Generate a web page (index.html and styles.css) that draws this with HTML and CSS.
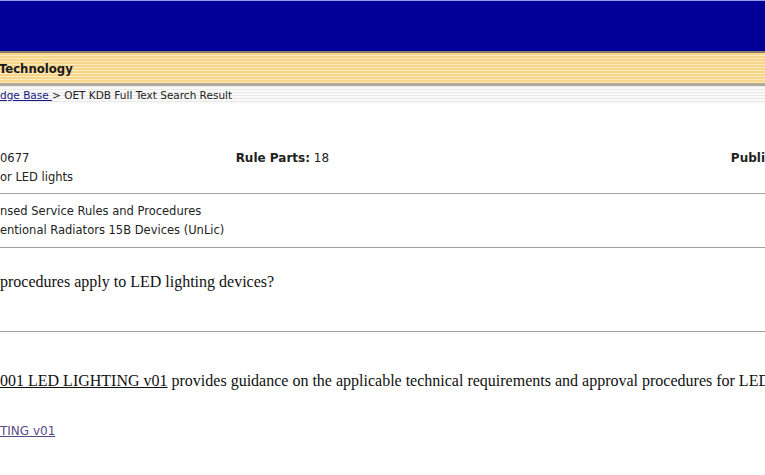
FILE: index.html
```html
<!DOCTYPE html>
<html>
<head>
	<title>OET KDB Full Text Search Result</title>
	<link rel="stylesheet" href="styles.css">
</head>
<body>

	<div class="banner"></div>
	<div class="org-bar">
		<span class="org-name">Technology</span>
	</div>
	<div class="crumbs">
		<a href="#" class="crumb-link">dge Base </a> &gt; OET KDB Full Text Search Result
	</div>

	<div class="record">
		<div class="meta">
			<div class="meta-cell">
				<div>0677</div>
				<div>or LED lights</div>
			</div>
			<div class="meta-cell meta-rule">
				<b>Rule Parts:</b> 18
			</div>
			<div class="meta-cell meta-pub">
				<b>Publi</b>
			</div>
		</div>

		<div class="category">
			<div>nsed Service Rules and Procedures</div>
			<div>entional Radiators 15B Devices (UnLic)</div>
		</div>

		<div class="question">
			procedures apply to LED lighting devices?
		</div>

		<div class="answer">
			<p class="answer-text"><a href="#" class="pub-link">001 LED LIGHTING v01</a> provides guidance on the applicable technical requirements and approval procedures for LED lighting devices.</p>
			<p class="attach"><a href="#" class="attach-link">TING v01 </a></p>
		</div>
	</div>

</body>
</html>
```

FILE: styles.css
```css
body {
	margin: 0;
	overflow: hidden;
	background-color: #fff;
	font-family: "DejaVu Sans", Verdana, sans-serif;
	font-size: 11.5px;
	color: #222;
}
.banner {
	height: 50px;
	border-top: 1px solid #9a9ae0;
	background-color: #000099;
}
.org-bar {
	height: 30px;
	border-top: 2px solid #8c7f68;
	background: repeating-linear-gradient(to bottom, #f7d68a 0, #f7d68a 2px, #fcebbf 2px, #fcebbf 3px);
	display: flex;
	align-items: center;
}
.org-name {
	margin-left: -1px;
	padding-top: 1px;
	font-family: "DejaVu Sans Condensed", "DejaVu Sans", Tahoma, sans-serif;
	font-weight: bold;
	font-size: 13px;
	color: #1a1a1a;
}
.crumbs {
	height: 16px;
	padding-top: 2px;
	border-top: 3px solid #b4aa98;
	background: repeating-linear-gradient(to bottom, #e9e9e9 0, #e9e9e9 1px, #fafafa 1px, #fafafa 3px);
	font-size: 10.5px;
	line-height: 15px;
	color: #222;
	white-space: nowrap;
}
.crumb-link {
	color: #1a1a80;
}
.record {
	padding-top: 45px;
}
.meta {
	display: flex;
	padding-bottom: 6px;
	border-bottom: 1px solid #a0a0a0;
	line-height: 19px;
}
.meta-cell {
	white-space: nowrap;
}
.meta-cell:first-child {
	width: 236px;
}
.meta-rule {
	width: 496px;
	font-size: 12px;
}
.meta-pub {
	font-size: 12px;
}
.category {
	padding: 8px 0 7px;
	border-bottom: 1px solid #a0a0a0;
	line-height: 19px;
}
.question {
	padding: 24px 0 40px;
	border-bottom: 1px solid #a0a0a0;
	font-family: "Liberation Serif", "Times New Roman", serif;
	font-size: 16px;
	line-height: 19px;
	color: #111;
}
.answer {
	padding-top: 39px;
}
.answer-text {
	margin: 0;
	white-space: nowrap;
	font-family: "Liberation Serif", "Times New Roman", serif;
	font-size: 16px;
	line-height: 19px;
	color: #111;
}
.pub-link {
	color: #111;
}
.attach {
	margin: 32px 0 0;
	line-height: 19px;
	font-size: 12px;
}
.attach-link {
	color: #5b4a86;
}
```
